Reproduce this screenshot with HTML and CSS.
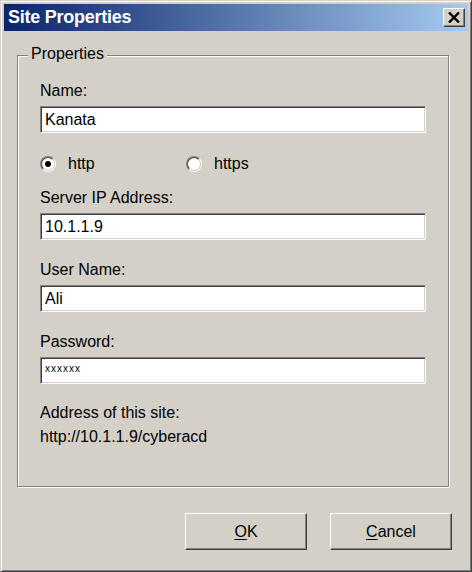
FILE: index.html
```html
<!DOCTYPE html>
<html>
<head>
<meta charset="utf-8">
<title>Site Properties</title>
<link rel="stylesheet" href="styles.css">
</head>
<body>
<div class="window">
  <div class="titlebar">
    <span class="title">Site Properties</span>
    <div class="close-btn">
      <svg width="12" height="11" viewBox="0 0 12 11"><path d="M1 0.5 L11 10.5 M11 0.5 L1 10.5" stroke="#000" stroke-width="2.4" fill="none"/></svg>
    </div>
  </div>
  <div class="content">
    <div class="group">
      <div class="legend">Properties</div>
      <div class="field">
        <div class="label">Name:</div>
        <div class="textbox">Kanata</div>
      </div>
      <div class="radio-row">
        <div class="radio"><span class="circle checked"><span class="inner"></span></span><span class="rlabel">http</span></div>
        <div class="radio"><span class="circle"><span class="inner"></span></span><span class="rlabel">https</span></div>
      </div>
      <div class="field">
        <div class="label">Server IP Address:</div>
        <div class="textbox">10.1.1.9</div>
      </div>
      <div class="field">
        <div class="label">User Name:</div>
        <div class="textbox">Ali</div>
      </div>
      <div class="field">
        <div class="label">Password:</div>
        <div class="textbox password">xxxxxx</div>
      </div>
      <div class="address">
        <div class="line">Address of this site:</div>
        <div class="line">http://10.1.1.9/cyberacd</div>
      </div>
    </div>
    <div class="buttons">
      <div class="button"><u>O</u>K</div>
      <div class="button"><u>C</u>ancel</div>
    </div>
  </div>
</div>
</body>
</html>
```

FILE: styles.css
```css
html, body {
  margin: 0;
  padding: 0;
  background: #d4d0c8;
}
body {
  width: 472px;
  height: 572px;
  overflow: hidden;
  font-family: "Liberation Sans", Arial, sans-serif;
  font-size: 16px;
  color: #000;
}
.window {
  box-sizing: border-box;
  width: 472px;
  height: 572px;
  background: #d4d0c8;
  border: 1px solid;
  border-color: #d4d0c8 #404040 #404040 #d4d0c8;
  box-shadow: inset 1px 1px 0 #fff, inset -1px -1px 0 #808080;
  padding: 3px;
  display: flex;
  flex-direction: column;
}
.titlebar {
  height: 27px;
  background: linear-gradient(to right, #0a246a, #a6caf0);
  display: flex;
  align-items: center;
  justify-content: space-between;
  padding: 0 3px 0 4px;
}
.title {
  color: #fff;
  font-weight: bold;
  font-size: 18px;
  letter-spacing: -0.25px;
  line-height: 27px;
}
.close-btn {
  box-sizing: border-box;
  width: 22px;
  height: 19px;
  background: #d4d0c8;
  border: 1px solid;
  border-color: #fff #404040 #404040 #fff;
  box-shadow: inset -1px -1px 0 #808080;
  display: flex;
  align-items: center;
  justify-content: center;
  padding-bottom: 1px;
}
.content {
  flex: 1;
  display: flex;
  flex-direction: column;
  padding: 24px 19px 0 13px;
}
.group {
  position: relative;
  border: 1px solid #808080;
  box-shadow: 1px 1px 0 #fff, inset 1px 1px 0 #fff;
  padding: 26px 20px 37px 22px;
  display: flex;
  flex-direction: column;
}
.legend {
  position: absolute;
  left: 10px;
  top: -11px;
  padding: 0 3px;
  background: #d4d0c8;
  line-height: 18px;
}
.field {
  display: flex;
  flex-direction: column;
  margin-bottom: 21px;
}
.label {
  line-height: 18px;
  margin-bottom: 6px;
}
.textbox {
  box-sizing: border-box;
  width: 386px;
  height: 27px;
  background: #fff;
  border: 1px solid;
  border-color: #808080 #fff #fff #808080;
  box-shadow: inset 1px 1px 0 #404040, inset -1px -1px 0 #d4d0c8;
  padding: 0 4px;
  line-height: 25px;
}
.textbox.password {
  font-size: 10px;
  letter-spacing: 1px;
  line-height: 22px;
}
.radio-row {
  display: flex;
  height: 18px;
  margin-top: 1px;
  margin-bottom: 16px;
  align-items: center;
}
.radio {
  width: 146px;
  display: flex;
  align-items: center;
  gap: 12px;
}
.circle {
  box-sizing: border-box;
  width: 16px;
  height: 16px;
  border-radius: 50%;
  border: 1px solid;
  border-color: #808080 #fff #fff #808080;
  display: flex;
}
.inner {
  box-sizing: border-box;
  flex: 1;
  border-radius: 50%;
  border: 1px solid;
  border-color: #404040 #d4d0c8 #d4d0c8 #404040;
  background: #fff;
  display: flex;
  align-items: center;
  justify-content: center;
}
.circle.checked .inner::after {
  content: "";
  width: 6px;
  height: 6px;
  border-radius: 50%;
  background: #000;
}
.rlabel {
  line-height: 18px;
}
.address {
  margin-top: -4px;
  display: flex;
  flex-direction: column;
}
.line {
  line-height: 24px;
}
.buttons {
  display: flex;
  justify-content: flex-end;
  gap: 23px;
  margin-top: 26px;
  margin-right: -3px;
}
.button {
  box-sizing: border-box;
  width: 122px;
  height: 37px;
  border: 1px solid;
  border-color: #fff #404040 #404040 #fff;
  box-shadow: inset -1px -1px 0 #808080;
  display: flex;
  align-items: center;
  justify-content: center;
  line-height: 18px;
}
.button u {
  text-decoration-thickness: 1px;
  text-underline-offset: 2px;
}
```
